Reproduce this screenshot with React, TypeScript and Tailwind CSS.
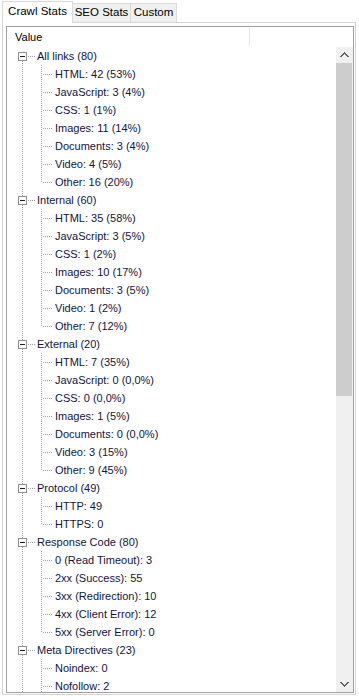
import React from "react";

type Section = { label: string; items: string[]; more?: boolean };

const sections: Section[] = [
  {
    label: "All links (80)",
    items: ["HTML: 42 (53%)", "JavaScript: 3 (4%)", "CSS: 1 (1%)", "Images: 11 (14%)", "Documents: 3 (4%)", "Video: 4 (5%)", "Other: 16 (20%)"],
  },
  {
    label: "Internal (60)",
    items: ["HTML: 35 (58%)", "JavaScript: 3 (5%)", "CSS: 1 (2%)", "Images: 10 (17%)", "Documents: 3 (5%)", "Video: 1 (2%)", "Other: 7 (12%)"],
  },
  {
    label: "External (20)",
    items: ["HTML: 7 (35%)", "JavaScript: 0 (0,0%)", "CSS: 0 (0,0%)", "Images: 1 (5%)", "Documents: 0 (0,0%)", "Video: 3 (15%)", "Other: 9 (45%)"],
  },
  { label: "Protocol (49)", items: ["HTTP: 49", "HTTPS: 0"] },
  {
    label: "Response Code (80)",
    items: ["0 (Read Timeout): 3", "2xx (Success): 55", "3xx (Redirection): 10", "4xx (Client Error): 12", "5xx (Server Error): 0"],
  },
  // list continues below the visible area
  { label: "Meta Directives (23)", items: ["Noindex: 0", "Nofollow: 2"], more: true },
];

const DOT = "#a0a0a0";

function ParentRow({ label, first }: { label: string; first: boolean }) {
  return (
    <div className="flex h-[18px] items-center">
      <svg width="30" height="18" className="shrink-0" shapeRendering="crispEdges">
        {!first && <line x1="15.5" y1="0" x2="15.5" y2="5" stroke={DOT} strokeDasharray="1 1" />}
        <line x1="15.5" y1="14" x2="15.5" y2="18" stroke={DOT} strokeDasharray="1 1" />
        <rect x="11.5" y="5.5" width="8" height="8" fill="#fff" stroke="#919191" />
        <line x1="13" y1="9.5" x2="18" y2="9.5" stroke="#1e1e1e" />
        <line x1="21" y1="9.5" x2="28" y2="9.5" stroke={DOT} strokeDasharray="1 1" />
      </svg>
      <span className="whitespace-nowrap">{label}</span>
    </div>
  );
}

function ChildRow({ label, last }: { label: string; last: boolean }) {
  return (
    <div className="flex h-[18px] items-center">
      <svg width="48" height="18" className="shrink-0" shapeRendering="crispEdges">
        <line x1="15.5" y1="0" x2="15.5" y2="18" stroke={DOT} strokeDasharray="1 1" />
        <line x1="34.5" y1="0" x2="34.5" y2={last ? 10 : 18} stroke={DOT} strokeDasharray="1 1" />
        <line x1="36" y1="9.5" x2="46" y2="9.5" stroke={DOT} strokeDasharray="1 1" />
      </svg>
      <span className="whitespace-nowrap">{label}</span>
    </div>
  );
}

function Chevron({ up }: { up: boolean }) {
  return (
    <svg width="9" height="6" viewBox="0 0 9 6" shapeRendering="crispEdges">
      <path d={up ? "M0.5 5 L4.5 1 L8.5 5" : "M0.5 1 L4.5 5 L8.5 1"} fill="none" stroke="#606060" strokeWidth="1.6" />
    </svg>
  );
}

export default function App() {
  return (
    <div
      className="w-[359px] h-[700px] overflow-hidden bg-white text-[#14143c]"
      style={{ fontFamily: '"Liberation Sans", Arial, sans-serif' }}
    >
      {/* Tabs */}
      <div className="flex h-[22px] items-end pl-[2px] text-[11.5px] text-black">
        <div className="relative z-10 -mb-px flex h-[22px] w-[71px] items-center justify-center border border-b-0 border-[#d9d9d9] bg-white pb-[1px]">
          Crawl Stats
        </div>
        <div className="flex h-[19px] w-[58px] items-center justify-center border border-l-0 border-b-0 border-[#d9d9d9] bg-[#f0f0f0]">
          SEO Stats
        </div>
        <div className="flex h-[19px] w-[46px] items-center justify-center border border-l-0 border-b-0 border-[#d9d9d9] bg-[#f0f0f0]">
          Custom
        </div>
      </div>

      {/* Tab page */}
      <div className="ml-[2px] flex h-[673px] w-[354px] border border-[#d4d4d4] bg-white pl-[3px] pt-[3px] pr-[1px] pb-[1px]">
        <div className="flex min-w-0 flex-1 flex-col border border-[#a0a0a0] text-[11px]">
          {/* Header */}
          <div className="flex h-[20px] shrink-0">
            <div className="flex w-[242px] items-center pl-[8px] text-black">Value</div>
            <div className="mt-[1px] h-[18px] w-px bg-[#e5e5e5]" />
          </div>

          {/* Body */}
          <div className="flex min-h-0 flex-1">
            <div className="min-w-0 flex-1 overflow-hidden">
              {sections.map((s, si) => (
                <div key={s.label}>
                  <ParentRow label={s.label} first={si === 0} />
                  {s.items.map((it, ii) => (
                    <ChildRow key={it} label={it} last={!s.more && ii === s.items.length - 1} />
                  ))}
                </div>
              ))}
            </div>

            {/* Scrollbar */}
            <div className="flex w-[17px] shrink-0 flex-col bg-[#f0f0f0]">
              <div className="flex h-[16px] items-center justify-center">
                <Chevron up />
              </div>
              <div className="mr-[1px] h-[333px] bg-[#cdcdcd]" />
              <div className="flex-1" />
              <div className="flex h-[17px] items-center justify-center">
                <Chevron up={false} />
              </div>
            </div>
          </div>
        </div>
      </div>
    </div>
  );
}
